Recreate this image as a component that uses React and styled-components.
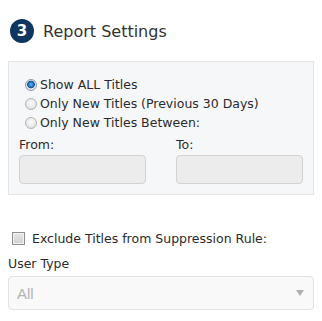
import React from "react";
import styled, { createGlobalStyle } from "styled-components";

const GlobalStyle = createGlobalStyle`
  html, body {
    margin: 0;
    padding: 0;
    background: #ffffff;
  }
  body {
    font-family: "DejaVu Sans", Verdana, sans-serif;
    color: #333333;
  }
`;

const Page = styled.div`
  width: 322px;
  height: 321px;
  box-sizing: border-box;
  padding: 19px 8px 0 8px;
  display: flex;
  flex-direction: column;
`;

const Heading = styled.div`
  display: flex;
  align-items: center;
  gap: 9px;
  padding-left: 2px;
  height: 24px;
`;

const StepBadge = styled.span`
  width: 24px;
  height: 24px;
  border-radius: 50%;
  background: #0f3661;
  color: #ffffff;
  font-family: "DejaVu Sans", Verdana, sans-serif;
  font-weight: bold;
  font-size: 15px;
  display: flex;
  align-items: center;
  justify-content: center;
`;

const HeadingText = styled.span`
  font-size: 16px;
  color: #333333;
`;

const Panel = styled.div`
  margin-top: 18px;
  background: #f6f7f9;
  border: 1px solid #e3e4e6;
  padding: 13px 10px 10px 10px;
  display: flex;
  flex-direction: column;
  height: 134px;
  box-sizing: border-box;
`;

const RadioList = styled.div`
  display: flex;
  flex-direction: column;
  padding-left: 6px;
`;

const RadioRow = styled.label`
  display: flex;
  align-items: center;
  gap: 3px;
  height: 19px;
  font-size: 12.5px;
  color: #2b2b2b;
`;

const RadioDot = styled.span`
  width: 12px;
  height: 12px;
  border-radius: 50%;
  box-sizing: border-box;
  border: 1px solid ${(p) => (p.checked ? "#8a9bb0" : "#b5b5b5")};
  background: ${(p) =>
    p.checked
      ? "radial-gradient(circle at 50% 45%, #6fb6ef 0, #1e74c3 2.5px, #134f8a 3.5px, #e9e9e9 4.2px, #d6d6d6 100%)"
      : "radial-gradient(circle at 50% 40%, #fbfbfb 0, #e8e8e8 60%, #d0d0d0 100%)"};
`;

const DateRow = styled.div`
  display: grid;
  grid-template-columns: 127px 127px;
  column-gap: 30px;
  margin-top: 6px;
`;

const DateField = styled.div`
  display: flex;
  flex-direction: column;
  gap: 3px;
`;

const FieldLabel = styled.span`
  font-size: 12.5px;
  color: #2b2b2b;
  line-height: 14px;
`;

const DateBox = styled.div`
  height: 29px;
  box-sizing: border-box;
  border: 1px solid #d2d2d2;
  border-radius: 4px;
  background: #ececec;
`;

const CheckRow = styled.label`
  display: flex;
  align-items: center;
  gap: 7px;
  margin-top: 36px;
  padding-left: 4px;
  font-size: 12.5px;
  color: #2b2b2b;
  height: 14px;
`;

const CheckBox = styled.span`
  width: 13px;
  height: 13px;
  box-sizing: border-box;
  border: 1px solid #8f8f8f;
  background: linear-gradient(#e6e6e6, #d2d2d2);
  box-shadow: inset 0 0 0 1px #f3f3f3;
`;

const SelectLabel = styled.div`
  margin-top: 12px;
  font-size: 12.5px;
  color: #2b2b2b;
  line-height: 14px;
`;

const SelectBox = styled.div`
  margin-top: 5px;
  height: 34px;
  box-sizing: border-box;
  border: 1px solid #e2e2e2;
  border-radius: 4px;
  background: #f9f9f9;
  display: flex;
  align-items: center;
  justify-content: space-between;
  padding: 0 9px 0 8px;
  font-family: "Liberation Sans", Arial, sans-serif;
  font-size: 15px;
  color: #b3b3b3;
`;

const Caret = styled.span`
  width: 0;
  height: 0;
  border-left: 4px solid transparent;
  border-right: 4px solid transparent;
  border-top: 6px solid #b0b0b0;
`;

const options = [
  { label: "Show ALL Titles", checked: true },
  { label: "Only New Titles (Previous 30 Days)", checked: false },
  { label: "Only New Titles Between:", checked: false },
];

export default function App() {
  return (
    <>
      <GlobalStyle />
      <Page>
        <Heading>
          <StepBadge>3</StepBadge>
          <HeadingText>Report Settings</HeadingText>
        </Heading>

        <Panel>
          <RadioList>
            {options.map((o) => (
              <RadioRow key={o.label}>
                <RadioDot checked={o.checked} />
                {o.label}
              </RadioRow>
            ))}
          </RadioList>
          <DateRow>
            <DateField>
              <FieldLabel>From:</FieldLabel>
              <DateBox />
            </DateField>
            <DateField>
              <FieldLabel>To:</FieldLabel>
              <DateBox />
            </DateField>
          </DateRow>
        </Panel>

        <CheckRow>
          <CheckBox />
          Exclude Titles from Suppression Rule:
        </CheckRow>

        <SelectLabel>User Type</SelectLabel>
        <SelectBox>
          All
          <Caret />
        </SelectBox>
      </Page>
    </>
  );
}
